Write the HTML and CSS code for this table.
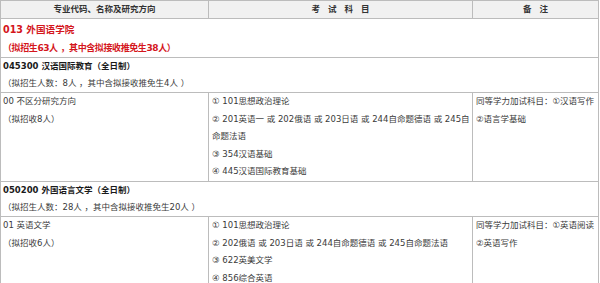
FILE: index.html
```html
<!DOCTYPE html>
<html lang="zh-CN">
<head>
<meta charset="utf-8">
<title>招生专业目录</title>
<link rel="stylesheet" href="styles.css">
</head>
<body>
<table class="plan">
  <colgroup>
    <col class="c1">
    <col class="c2">
    <col class="c3">
  </colgroup>
  <thead>
    <tr>
      <th>专业代码、名称及研究方向</th>
      <th class="spaced">考 试 科 目</th>
      <th class="spaced">备 注</th>
    </tr>
  </thead>
  <tbody>
    <tr class="college">
      <td colspan="3">
        <div>013 外国语学院</div>
        <div class="quota">（拟招生63人 ，其中含拟接收推免生38人）</div>
      </td>
    </tr>
    <tr class="major">
      <td colspan="3">
        <div class="title">045300 汉语国际教育（全日制）</div>
        <div>（拟招生人数：8人 ，其中含拟接收推免生4人 ）</div>
      </td>
    </tr>
    <tr class="dir">
      <td>
        <div>00 不区分研究方向</div>
        <div>（拟招收8人）</div>
      </td>
      <td>
        <div>① 101思想政治理论</div>
        <div>② 201英语一 或 202俄语 或 203日语 或 244自命题德语 或 245自命题法语</div>
        <div>③ 354汉语基础</div>
        <div>④ 445汉语国际教育基础</div>
      </td>
      <td>
        <div>同等学力加试科目：①汉语写作</div>
        <div>②语言学基础</div>
      </td>
    </tr>
    <tr class="major">
      <td colspan="3">
        <div class="title">050200 外国语言文学（全日制）</div>
        <div>（拟招生人数：28人 ，其中含拟接收推免生20人 ）</div>
      </td>
    </tr>
    <tr class="dir">
      <td>
        <div>01 英语文学</div>
        <div>（拟招收6人）</div>
      </td>
      <td>
        <div>① 101思想政治理论</div>
        <div>② 202俄语 或 203日语 或 244自命题德语 或 245自命题法语</div>
        <div>③ 622英美文学</div>
        <div>④ 856综合英语</div>
      </td>
      <td>
        <div>同等学力加试科目：①英语阅读</div>
        <div>②英语写作</div>
      </td>
    </tr>
  </tbody>
</table>
</body>
</html>
```
FILE: styles.css
```css
html, body {
  margin: 0;
  padding: 0;
  background: #ffffff;
}

body {
  font-family: "DejaVu Sans", "Noto Sans CJK SC", sans-serif;
  font-size: 8.5px;
  color: #3a3a3a;
}

.plan {
  width: 598px;
  table-layout: fixed;
  border-collapse: collapse;
  border: 1px solid #bcbcbc;
}

.plan .c1 { width: 208px; }
.plan .c2 { width: 264px; }
.plan .c3 { width: 126px; }

.plan th {
  background: #f1f1f1;
  color: #333333;
  font-weight: bold;
  text-align: center;
  height: 17px;
  line-height: 17px;
  padding: 0;
  border: 1px solid #bcbcbc;
}

.plan .spaced {
  word-spacing: 5px;
}

.plan td {
  vertical-align: top;
  padding: 0 2px;
  line-height: 17px;
  border: 1px solid #bcbcbc;
}

.college td {
  color: #d4161c;
  font-weight: bold;
  font-size: 9.6px;
  line-height: 18px;
  padding-top: 2px;
}

.college .quota {
  font-size: 9px;
  letter-spacing: -0.4px;
}

.major .title {
  color: #1a1a1a;
  font-weight: bold;
}

.dir td {
  line-height: 17.6px;
}

.dir td + td {
  padding-left: 3px;
}
```
